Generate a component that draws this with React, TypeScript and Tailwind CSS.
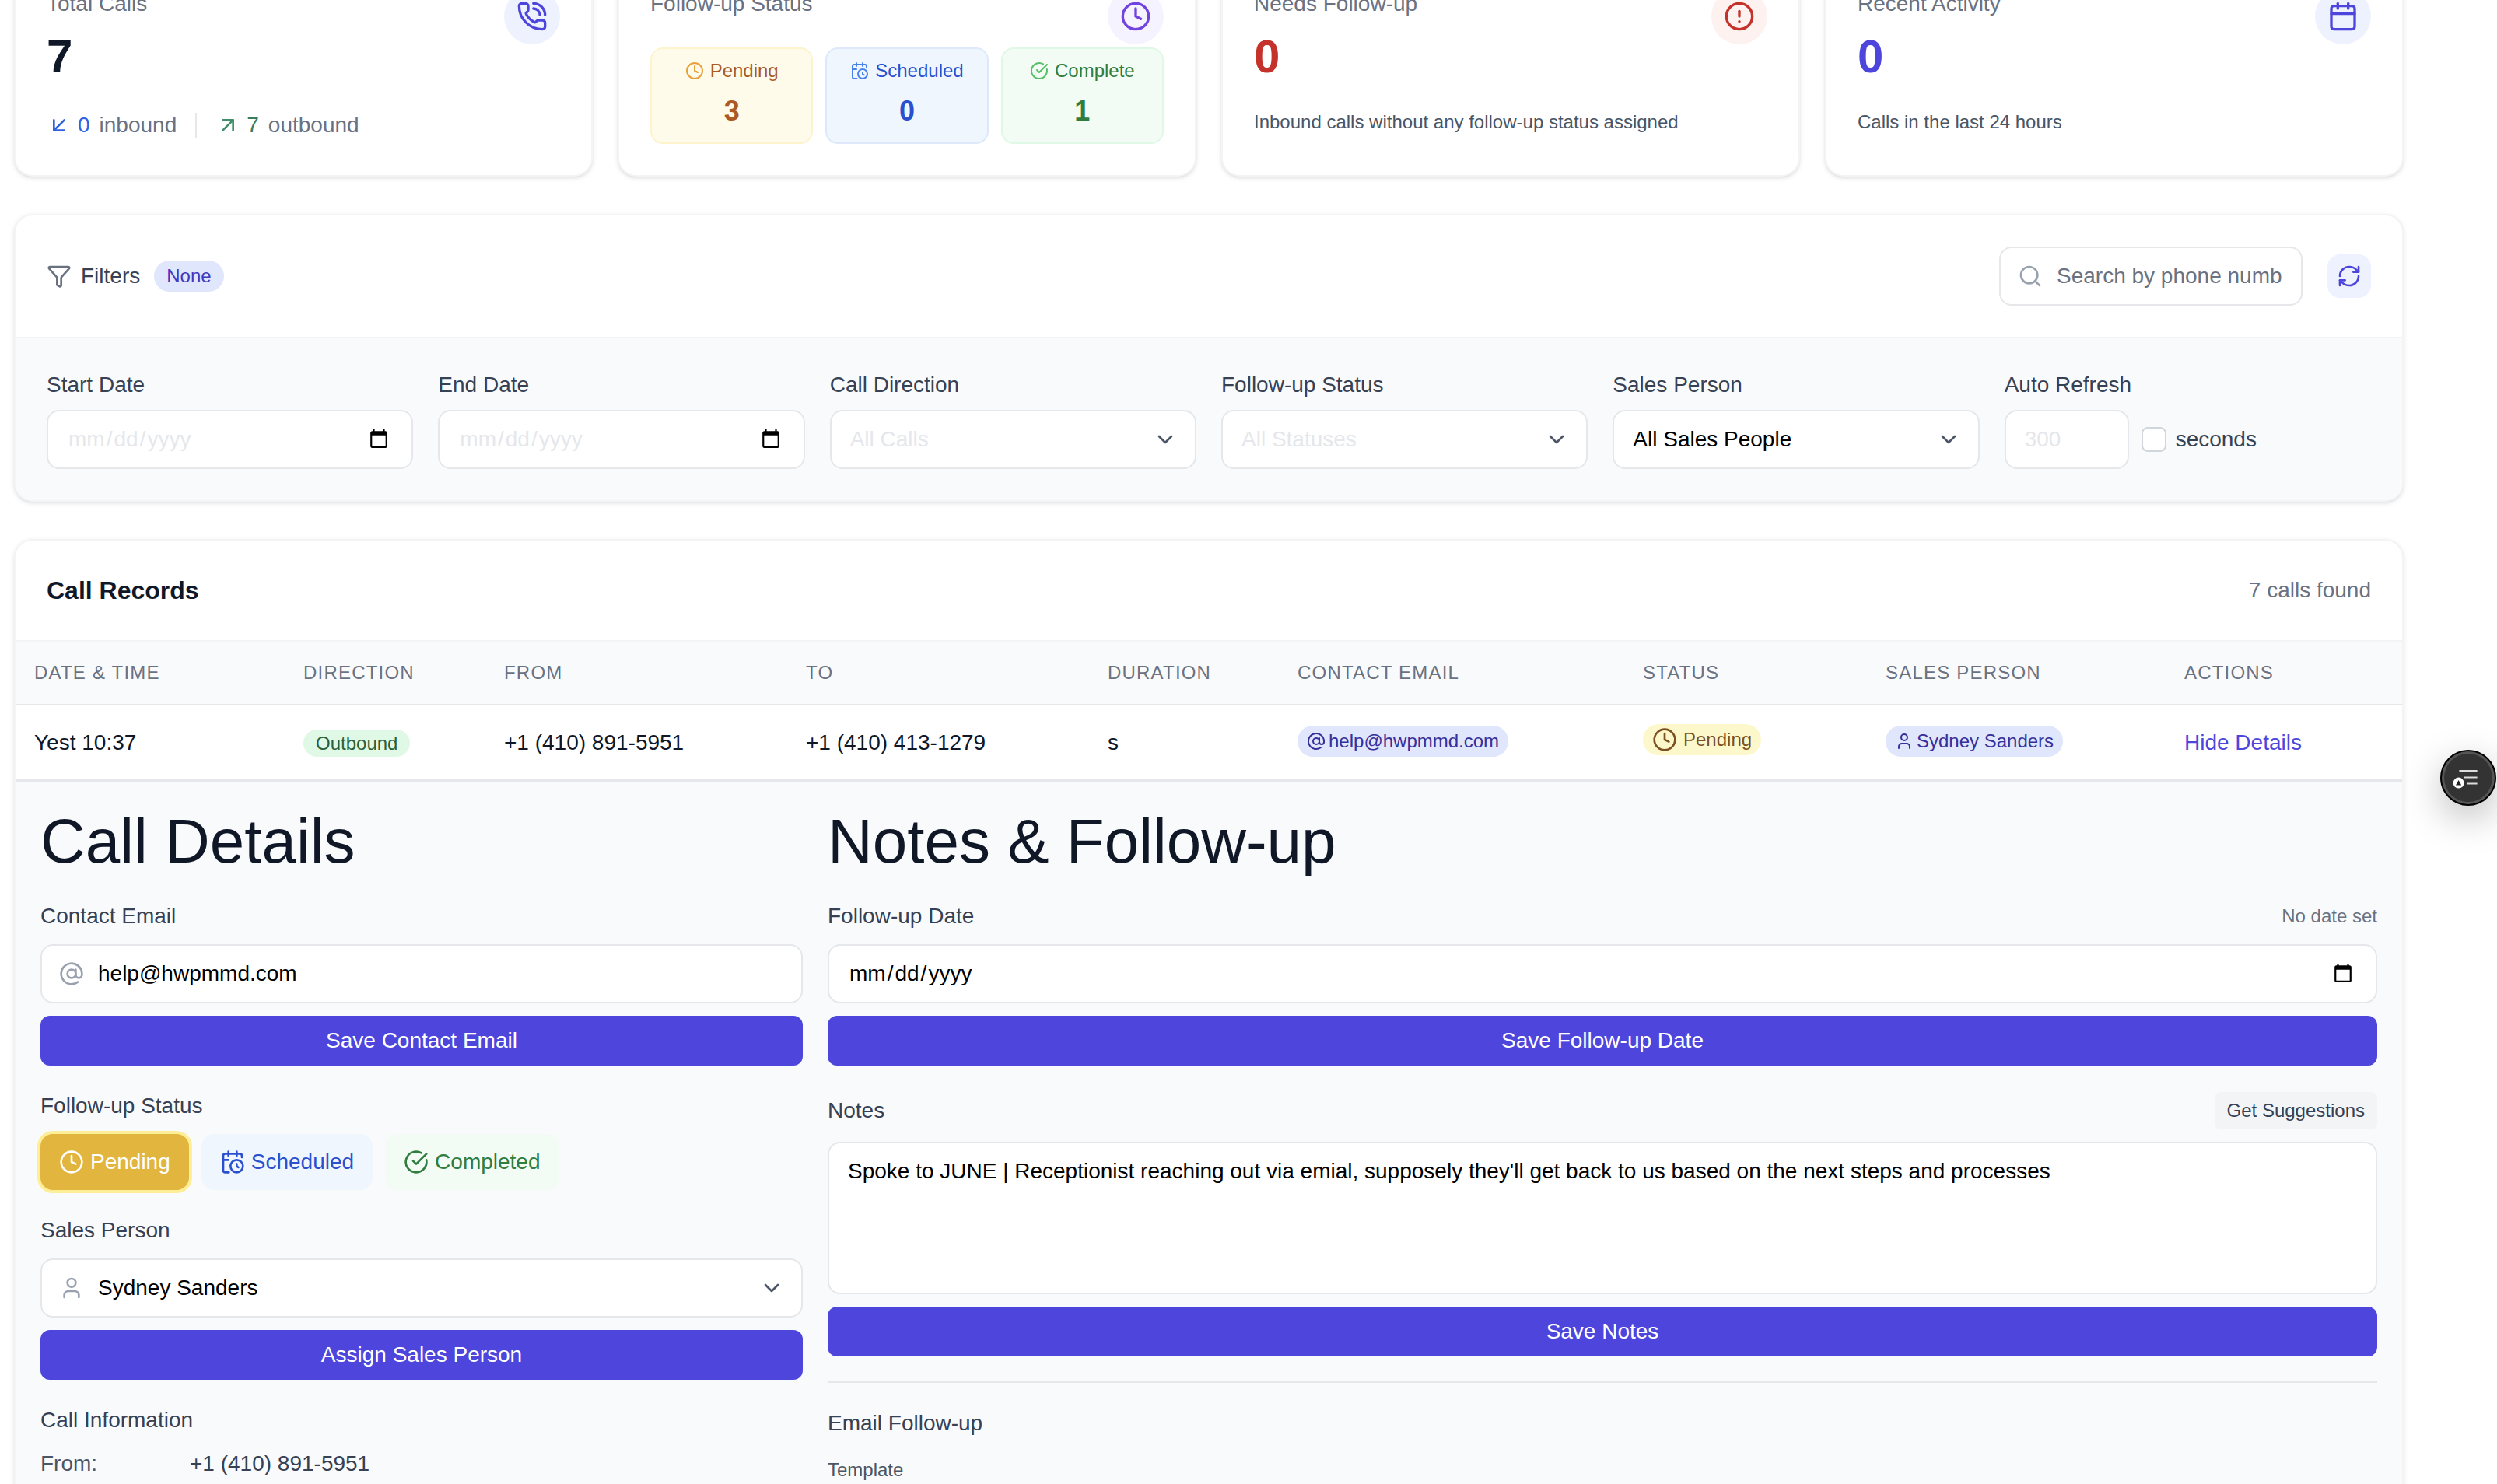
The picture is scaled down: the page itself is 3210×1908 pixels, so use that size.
import {
  AlertCircle,
  ArrowDownLeft,
  ArrowUpRight,
  AtSign,
  Calendar,
  CalendarClock,
  CheckCircle,
  ChevronDown,
  Clock,
  Filter,
  PhoneCall,
  RefreshCw,
  Search,
  User,
} from "lucide-react";
import type { ReactNode } from "react";

const cardClass = "rounded-xl border border-gray-100 bg-white shadow-sm";
const labelClass = "block text-sm text-gray-700";
const fieldClass = "h-[38px] rounded-lg border border-gray-200 bg-white px-3 text-sm outline-none";
const inputClass = `${fieldClass} w-full`;
const primaryButton = "mt-2 block h-8 w-full rounded-md bg-[#4e46dc] text-center text-sm text-white";

const columns = [
  { label: "Date & Time", width: "w-[173px]" },
  { label: "Direction", width: "w-[129px]" },
  { label: "From", width: "w-[194px]" },
  { label: "To", width: "w-[194px]" },
  { label: "Duration", width: "w-[122px]" },
  { label: "Contact Email", width: "w-[222px]" },
  { label: "Status", width: "w-[156px]" },
  { label: "Sales Person", width: "w-[192px]" },
  { label: "Actions", width: "w-[154px]" },
];

function StatCard({
  title,
  icon,
  iconClass,
  children,
}: {
  title: string;
  icon: ReactNode;
  iconClass: string;
  children: ReactNode;
}) {
  return (
    <div className={`${cardClass} flex h-[142px] items-start justify-between p-5`}>
      <div className="min-w-0 flex-1">
        <p className="text-sm text-gray-500">{title}</p>
        {children}
      </div>
      <span className={`shrink-0 rounded-full p-2 ${iconClass}`}>{icon}</span>
    </div>
  );
}

function MiniStat({
  label,
  value,
  icon,
  boxClass,
  textClass,
}: {
  label: string;
  value: number;
  icon: ReactNode;
  boxClass: string;
  textClass: string;
}) {
  return (
    <div className={`rounded-lg border px-1 py-1.5 text-center ${boxClass}`}>
      <div className={`flex h-4 items-center justify-center gap-1 text-xs ${textClass}`}>
        {icon}
        {label}
      </div>
      <div className={`mt-1 text-lg font-bold ${textClass}`}>{value}</div>
    </div>
  );
}

function FilterSelect({ label, value, dim }: { label: string; value: string; dim?: boolean }) {
  return (
    <div>
      <label className={`${labelClass} mb-1.5`}>{label}</label>
      <div className="relative">
        <select
          defaultValue={value}
          className={`${inputClass} appearance-none ${dim ? "text-gray-200" : "text-black"}`}
        >
          <option>{value}</option>
        </select>
        <ChevronDown className="absolute right-3 top-[11px] h-4 w-4 text-gray-600" />
      </div>
    </div>
  );
}

function FilterDate({ label }: { label: string }) {
  return (
    <div>
      <label className={`${labelClass} mb-1.5`}>{label}</label>
      <input type="date" className={`${inputClass} text-gray-200`} />
    </div>
  );
}

function Pill({ icon, text, className }: { icon: ReactNode; text: string; className: string }) {
  return (
    <span className={`inline-flex items-center rounded-full px-1.5 py-0.5 text-xs ${className}`}>
      {icon}
      {text}
    </span>
  );
}

function CallDetails() {
  return (
    <div className="flex gap-4 border-t-2 border-gray-200 bg-gray-50 p-4 pt-[14px]">
      <div className="w-[490px] shrink-0">
        <h2 className="mb-3.5 text-[40px] leading-[48px] font-medium text-gray-900">Call Details</h2>
        <label className={labelClass}>Contact Email</label>
        <div className="relative mt-2">
          <AtSign className="absolute left-3 top-[11px] h-4 w-4 text-gray-400" />
          <input defaultValue="help@hwpmmd.com" className={`${inputClass} pl-9 text-black`} />
        </div>
        <button className={primaryButton}>Save Contact Email</button>

        <label className={`${labelClass} mt-4`}>Follow-up Status</label>
        <div className="mt-2 flex gap-2">
          <button className="flex h-9 items-center gap-1 rounded-lg bg-[#e2b53e] px-3 text-sm text-white ring-2 ring-[#fdee97]">
            <Clock className="h-4 w-4" />
            Pending
          </button>
          <button className="flex h-9 items-center gap-1 rounded-lg bg-[#f0f6fe] px-3 text-sm text-[#2a50ce]">
            <CalendarClock className="h-4 w-4" />
            Scheduled
          </button>
          <button className="flex h-9 items-center gap-1 rounded-lg bg-[#f2fcf4] px-3 text-sm text-[#2f7d3f]">
            <CheckCircle className="h-4 w-4" />
            Completed
          </button>
        </div>

        <label className={`${labelClass} mt-4`}>Sales Person</label>
        <div className="relative mt-2">
          <User className="absolute left-3 top-[11px] h-4 w-4 text-gray-400" />
          <select defaultValue="Sydney Sanders" className={`${inputClass} appearance-none pl-9 text-black`}>
            <option>Sydney Sanders</option>
          </select>
          <ChevronDown className="absolute right-3 top-[11px] h-4 w-4 text-gray-600" />
        </div>
        <button className={primaryButton}>Assign Sales Person</button>

        <label className={`${labelClass} mt-4`}>Call Information</label>
        <div className="mt-2 flex text-sm">
          <span className="w-24 text-gray-600">From:</span>
          <span className="text-gray-700">+1 (410) 891-5951</span>
        </div>
      </div>

      <div className="min-w-0 flex-1">
        <h2 className="mb-3.5 text-[40px] leading-[48px] font-medium text-gray-900">Notes &amp; Follow-up</h2>
        <div className="flex items-center justify-between">
          <label className={labelClass}>Follow-up Date</label>
          <span className="text-xs text-gray-500">No date set</span>
        </div>
        <input type="date" className={`${inputClass} mt-2 block text-black`} />
        <button className={primaryButton}>Save Follow-up Date</button>

        <div className="mt-[17px] flex items-center justify-between">
          <label className={labelClass}>Notes</label>
          <button className="h-6 rounded bg-gray-100 px-2 text-xs text-gray-700">Get Suggestions</button>
        </div>
        <textarea
          rows={4}
          defaultValue="Spoke to JUNE | Receptionist reaching out via emial, supposely they'll get back to us based on the next steps and processes"
          className="mt-2 block w-full resize-none rounded-lg border border-gray-200 bg-white px-3 py-2 text-sm text-black outline-none"
        />
        <button className={primaryButton}>Save Notes</button>

        <div className="mt-4 border-t border-gray-200 pt-4">
          <p className={labelClass}>Email Follow-up</p>
          <p className="mt-3 text-xs text-gray-600">Template</p>
        </div>
      </div>
    </div>
  );
}

export default function App() {
  return (
    <div className="h-screen overflow-hidden bg-white font-['Liberation_Sans',Arial,sans-serif]">
      <div className="relative h-[954px] overflow-hidden [zoom:2]">
        <div className="-mt-[28.5px] ml-[9px] flex w-[1536px] flex-col gap-6">
          <div className="grid grid-cols-4 gap-4">
            <StatCard
              title="Total Calls"
              iconClass="bg-[#eef2fe] text-[#4e46dc]"
              icon={<PhoneCall className="h-5 w-5" />}
            >
              <p className="mt-1.5 text-3xl font-bold text-gray-900">7</p>
              <div className="mt-4 flex items-center text-sm">
                <ArrowDownLeft className="h-4 w-4 text-[#2f62e0]" />
                <span className="ml-1 text-[#2f62e0]">0</span>
                <span className="ml-1.5 text-gray-500">inbound</span>
                <span className="mx-3 h-4 w-px bg-gray-200" />
                <ArrowUpRight className="h-4 w-4 text-[#3f8f6b]" />
                <span className="ml-1 text-[#3a7d5c]">7</span>
                <span className="ml-1.5 text-gray-500">outbound</span>
              </div>
            </StatCard>
            <div className={`${cardClass} h-[142px] p-5`}>
              <div className="flex items-start justify-between">
                <p className="text-sm text-gray-500">Follow-up Status</p>
                <span className="rounded-full bg-[#f5f3ff] p-2 text-[#7243df]">
                  <Clock className="h-5 w-5" />
                </span>
              </div>
              <div className="mt-[2px] grid grid-cols-3 gap-2">
                <MiniStat
                  label="Pending"
                  value={3}
                  boxClass="border-[#fdf3cd] bg-[#fefbeb]"
                  textClass="text-[#ab5a24]"
                  icon={<Clock className="h-3 w-3 text-[#e9a03a]" />}
                />
                <MiniStat
                  label="Scheduled"
                  value={0}
                  boxClass="border-[#dde9fb] bg-[#f0f6fe]"
                  textClass="text-[#2a50ce]"
                  icon={<CalendarClock className="h-3 w-3 text-[#4880ee]" />}
                />
                <MiniStat
                  label="Complete"
                  value={1}
                  boxClass="border-[#e0f9e6] bg-[#f2fcf4]"
                  textClass="text-[#2f7d3f]"
                  icon={<CheckCircle className="h-3 w-3 text-[#57bf68]" />}
                />
              </div>
            </div>
            <StatCard
              title="Needs Follow-up"
              iconClass="bg-[#fdf2f0] text-[#c5322b]"
              icon={<AlertCircle className="h-5 w-5" />}
            >
              <p className="mt-1.5 text-3xl font-bold text-[#c5322b]">0</p>
              <p className="mt-4 text-xs text-gray-600">Inbound calls without any follow-up status assigned</p>
            </StatCard>
            <StatCard
              title="Recent Activity"
              iconClass="bg-[#eef2fe] text-[#4e46dc]"
              icon={<Calendar className="h-5 w-5" />}
            >
              <p className="mt-1.5 text-3xl font-bold text-[#4e46dc]">0</p>
              <p className="mt-4 text-xs text-gray-600">Calls in the last 24 hours</p>
            </StatCard>
          </div>

          <div className={`${cardClass} overflow-hidden`}>
            <div className="flex items-center justify-between border-b border-gray-100 p-5">
              <div className="flex items-center gap-1.5 text-sm text-gray-700">
                <Filter className="h-4 w-4 text-gray-500" />
                Filters
                <span className="ml-[3px] rounded-full bg-[#e0e6fb] px-2 py-0.5 text-xs text-[#4338c0]">None</span>
              </div>
              <div className="flex items-center gap-4">
                <div className="relative w-[195px]">
                  <Search className="absolute left-3 top-[11px] h-4 w-4 text-gray-400" />
                  <input
                    placeholder="Search by phone number..."
                    className={`${inputClass} pl-9 placeholder:text-gray-500`}
                  />
                </div>
                <button className="rounded-lg bg-[#eef2fe] p-1.5 text-[#4e46dc]">
                  <RefreshCw className="h-4 w-4" />
                </button>
              </div>
            </div>
            <div className="grid grid-cols-6 gap-4 bg-gray-50 p-5">
              <FilterDate label="Start Date" />
              <FilterDate label="End Date" />
              <FilterSelect label="Call Direction" value="All Calls" dim />
              <FilterSelect label="Follow-up Status" value="All Statuses" dim />
              <FilterSelect label="Sales Person" value="All Sales People" />
              <div>
                <label className={`${labelClass} mb-1.5`}>Auto Refresh</label>
                <div className="flex items-center">
                  <input placeholder="300" className={`${fieldClass} w-20 placeholder:text-gray-200`} />
                  <span className="ml-2 h-4 w-4 rounded border border-gray-300 bg-white" />
                  <span className="ml-1.5 text-sm text-gray-700">seconds</span>
                </div>
              </div>
            </div>
          </div>

          <div className={`${cardClass} overflow-hidden`}>
            <div className="flex items-center justify-between border-b border-gray-100 p-5">
              <h3 className="text-base font-semibold text-gray-900">Call Records</h3>
              <span className="text-sm text-gray-500">7 calls found</span>
            </div>
            <table className="w-full table-fixed border-collapse">
              <thead>
                <tr className="border-b border-gray-200 bg-gray-50">
                  {columns.map((col) => (
                    <th
                      key={col.label}
                      className={`${col.width} px-3 py-3 text-left text-xs font-normal uppercase tracking-wider text-gray-500`}
                    >
                      {col.label}
                    </th>
                  ))}
                </tr>
              </thead>
              <tbody>
                <tr className="h-12 text-sm text-gray-900">
                  <td className="px-3">Yest 10:37</td>
                  <td className="px-3">
                    <span className="rounded-full bg-[#e0f9e6] px-2 py-0.5 text-xs text-[#2a613a]">Outbound</span>
                  </td>
                  <td className="px-3">+1 (410) 891-5951</td>
                  <td className="px-3">+1 (410) 413-1279</td>
                  <td className="px-3">s</td>
                  <td className="px-3">
                    <Pill
                      icon={<AtSign className="mr-0.5 h-3 w-3" />}
                      text="help@hwpmmd.com"
                      className="bg-[#e0e6fb] text-[#36309c]"
                    />
                  </td>
                  <td className="px-3">
                    <Pill
                      icon={<Clock className="mr-1 h-4 w-4" />}
                      text="Pending"
                      className="bg-[#fdf8cb] text-[#7c5020]"
                    />
                  </td>
                  <td className="px-3">
                    <Pill
                      icon={<User className="mr-0.5 h-3 w-3" />}
                      text="Sydney Sanders"
                      className="bg-[#e0e6fb] text-[#36309c]"
                    />
                  </td>
                  <td className="px-3 text-[#4e46dc]">Hide Details</td>
                </tr>
              </tbody>
            </table>
            <CallDetails />
          </div>
        </div>

        <button className="absolute left-[1568.5px] top-[482px] flex h-9 w-9 items-center justify-center rounded-full border border-black bg-[#333] text-white shadow-[0_8px_24px_rgba(0,0,0,0.25),inset_0_0_0_1.5px_#555]">
          <svg viewBox="0 0 20 20" className="h-5 w-5" fill="none" stroke="#ddd" strokeWidth="1">
            <path d="M4.2 5.5H15.8M7 9.7H15.8M9 13.8H15.8" />
            <circle cx="3.8" cy="13.3" r="3.5" fill="#fff" stroke="none" />
            <path d="M3.8 11.5L5.6 14.7H2Z" fill="#222" stroke="none" />
          </svg>
        </button>
      </div>
    </div>
  );
}
